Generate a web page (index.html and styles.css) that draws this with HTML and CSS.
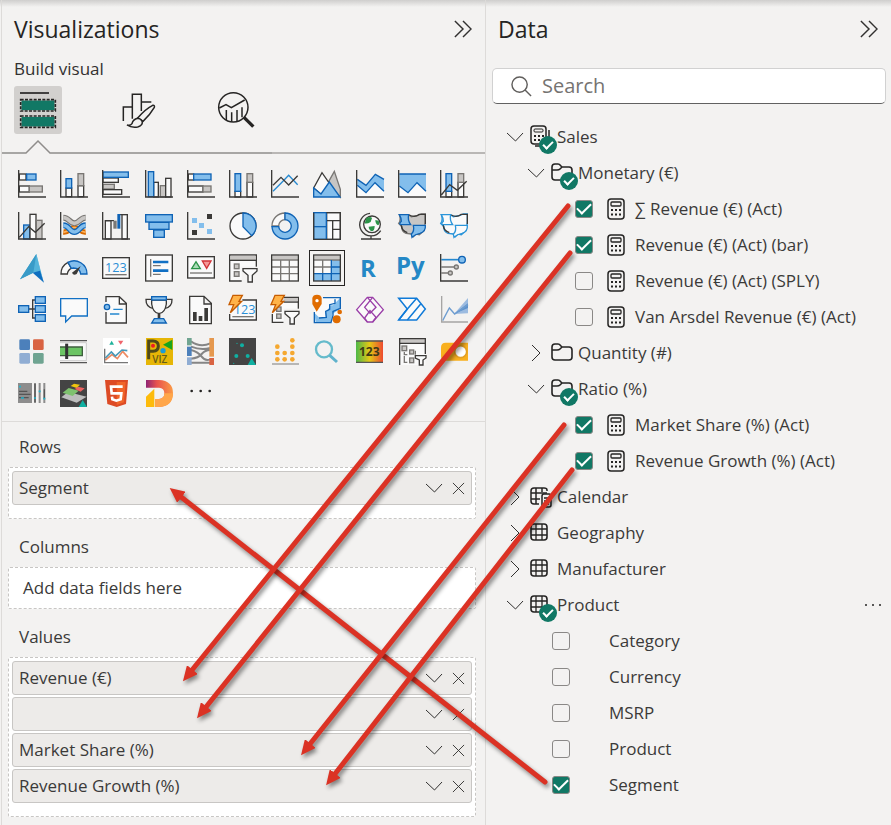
FILE: index.html
```html
<!DOCTYPE html>
<html lang="en">
<head>
<meta charset="utf-8">
<meta name="viewport" content="width=device-width, initial-scale=1">
<title>Visualizations and Data</title>
<link rel="stylesheet" href="styles.css">
</head>
<body>
<svg class="defs" aria-hidden="true">
  <symbol id="down" viewBox="0 0 18 18"><path d="M1 5L9.500 13L17 5"/></symbol>
  <symbol id="right" viewBox="0 0 18 18"><path d="M5 1L13 9L5 17"/></symbol>
  <symbol id="close" viewBox="0 0 14 14"><path d="M1 1L13 13M13 1L1 13"/></symbol>
  <symbol id="collapse" viewBox="0 0 20 20"><path d="M1 1L10 10L1 19M10 1L19 10L10 19"/></symbol>
  <symbol id="calc" viewBox="0 0 18 22">
    <rect x="1" y="1" width="16" height="20" rx="3" fill="none" stroke="#252423" stroke-width="1.500"/>
    <rect x="4" y="4" width="10" height="4" rx="1" fill="none" stroke="#252423" stroke-width="1.300"/>
    <path d="M4 12h2M8 12h2M12 12h2M4 16.500h2M8 16.500h2M12 16.500h2" stroke="#252423" stroke-width="2"/>
  </symbol>
  <symbol id="table" viewBox="0 0 18 18">
    <rect x="1" y="1" width="16" height="16" rx="3" fill="none" stroke="#252423" stroke-width="1.600"/>
    <path d="M6 1V17M12 1V17M1 6H17M1 12H17" stroke="#252423" stroke-width="1.300"/>
  </symbol>
  <symbol id="folder" viewBox="0 0 22 18">
    <path d="M1 4Q1 1 4 1H7Q8.500 1 9.500 2.500L11 4H18Q21 4 21 7V14Q21 17 18 17H4Q1 17 1 14ZM1 7H6Q8 7 9 6L11 4" fill="none" stroke="#252423" stroke-width="1.600"/>
  </symbol>
</svg>

<main class="app">
  <section class="pane viz">
    <header class="pane-head">
      <h1>Visualizations</h1>
      <button class="plain" aria-label="Collapse Visualizations"><svg class="stroke collapse"><use href="#collapse"/></svg></button>
    </header>
    <h2>Build visual</h2>
    <div class="modes">
      <button class="mode on" aria-label="Build visual">
        <svg viewBox="0 0 144 144"><path d="M18 21H105" stroke="#252423" stroke-width="5"/><rect x="20" y="42" width="104" height="33" fill="#117865"/><rect x="20" y="92" width="104" height="32" fill="#117865"/><g fill="none" stroke="#d2d0ce" stroke-width="5"><rect x="20" y="41" width="104" height="34"/><rect x="20" y="90" width="104" height="34"/></g><g fill="none" stroke="#252423" stroke-width="5" stroke-dasharray="9 4"><rect x="20" y="41" width="104" height="34"/><rect x="20" y="90" width="104" height="34"/></g></svg>
      </button>
      <button class="mode" aria-label="Format visual">
        <svg viewBox="0 0 144 144" fill="none" stroke="#252423" stroke-width="4.500"><path d="M31 105V63H58M58 98V25H85V75M85 48H115"/><path d="M74 96Q96 70 119 58Q126 57 124 64Q110 88 90 106Z" fill="#f3f2f1"/><path d="M74 97Q60 100 57 113Q52 120 42 117Q55 126 74 123Q89 119 88 107Q84 98 74 97Z" fill="#f3f2f1"/></svg>
      </button>
      <button class="mode" aria-label="Analytics">
        <svg viewBox="0 0 144 144" fill="none" stroke="#252423" stroke-width="4.500"><circle cx="64" cy="64" r="44"/><path d="M22 66L42 56L58 65L98 42M43 102V72M59 107V79M75 105V72M90 94V64"/><path d="M96 94L124 122" stroke-width="10"/></svg>
      </button>
    </div>
    <div class="divider" aria-hidden="true">
      <svg viewBox="0 0 270 14"><path d="M0 13H24L36 1L48 13H270" fill="none" stroke="#8f8d8b" stroke-width="1.500"/></svg><span></span>
    </div>

    <div class="gallery">
      <button aria-label="Stacked bar chart"><svg viewBox="0 0 84 84"><rect class="w" x="4" y="12" width="20" height="18"/><rect class="b" x="26" y="12" width="28" height="18"/><rect class="w" x="4" y="48" width="30" height="18"/><rect class="g" x="34" y="48" width="39" height="18"/><path class="k" d="M2 0V81H84"/></svg></button>
      <button aria-label="Stacked column chart"><svg viewBox="0 0 84 84"><rect class="w" x="18" y="54" width="17" height="26"/><rect class="b" x="18" y="26" width="17" height="28"/><rect class="w" x="54" y="47" width="17" height="33"/><rect class="g" x="54" y="11" width="17" height="36"/><path class="k" d="M2 0V81H84"/></svg></button>
      <button aria-label="Clustered bar chart"><svg viewBox="0 0 84 84"><rect class="w" x="3" y="24" width="46" height="13"/><rect class="g" x="3" y="43" width="34" height="14"/><rect class="w" x="3" y="59" width="56" height="14"/><rect class="b" x="3" y="6" width="76" height="16"/><path class="k" d="M2 0V81H84"/></svg></button>
      <button aria-label="Clustered column chart"><svg viewBox="0 0 84 84"><rect class="w" x="26" y="37" width="14" height="44"/><rect class="g" x="46" y="47" width="16" height="34"/><rect class="w" x="62" y="25" width="16" height="56"/><rect class="b" x="10" y="5" width="16" height="75"/><path class="k" d="M2 0V81H84"/></svg></button>
      <button aria-label="100% stacked bar chart"><svg viewBox="0 0 84 84"><rect class="w" x="4" y="12" width="16" height="18"/><rect class="b" x="20" y="12" width="52" height="18"/><rect class="w" x="4" y="48" width="44" height="18"/><rect class="g" x="48" y="48" width="24" height="18"/><path class="k" d="M2 0V81H84"/></svg></button>
      <button aria-label="100% stacked column chart"><svg viewBox="0 0 84 84"><rect class="w" x="18" y="64" width="17" height="17"/><rect class="b" x="18" y="11" width="17" height="53"/><rect class="w" x="54" y="37" width="17" height="44"/><rect class="g" x="54" y="11" width="17" height="26"/><path class="k" d="M2 0V81H84"/></svg></button>
      <button aria-label="Line chart"><svg viewBox="0 0 84 84"><path d="M6 64L30 40L53 16L80 44" fill="none" stroke="#2488cf" stroke-width="4"/><path class="k" d="M6 46L30 22L53 45L80 17M2 0V81H84"/></svg></button>
      <button aria-label="Area chart"><svg viewBox="0 0 84 84"><path class="g" d="M44 40L64 4L82 58V81Z"/><path class="w" d="M2 54L27 8L52 44L30 78Z"/><path class="b" d="M2 54L24 72L49 36L81 81H2Z"/></svg></button>
      <button aria-label="Stacked area chart"><svg viewBox="0 0 84 84"><path fill="#fafafa" d="M4 46L30 68L57 38L84 62V80H4Z"/><path d="M4 28L30 46L58 13L84 28V64L57 38L30 68L4 46Z" fill="#83beec"/><path class="bl" d="M4 28L30 46L58 13L84 28M4 46L30 68L57 38L84 64"/><path class="k" d="M2 0V81H84"/></svg></button>
      <button aria-label="100% stacked area chart"><svg viewBox="0 0 84 84"><path fill="#fafafa" d="M4 46L30 68L57 38L84 62V80H4Z"/><path d="M4 12H84V64L57 38L30 68L4 48Z" fill="#83beec"/><path class="bl" d="M4 12H84M4 48L30 68L57 38L84 64"/><path class="k" d="M2 0V81H84"/></svg></button>
      <button aria-label="Line and stacked column chart"><svg viewBox="0 0 84 84"><rect class="w" x="18" y="64" width="17" height="17"/><rect class="b" x="18" y="11" width="17" height="53"/><rect class="w" x="54" y="37" width="17" height="44"/><rect class="g" x="54" y="11" width="17" height="26"/><path class="k" d="M4 75L29 44L52 61L80 34M2 0V81H84"/></svg></button>

      <button aria-label="Line and clustered column chart"><svg viewBox="0 0 84 84"><rect class="b" x="17" y="39" width="18" height="42"/><rect class="w" x="36" y="7" width="18" height="74"/><rect class="g" x="55" y="25" width="17" height="56"/><path class="k" d="M4 76L32 44L52 61L80 34M2 0V81H84"/></svg></button>
      <button aria-label="Ribbon chart"><svg viewBox="0 0 84 84" fill="none"><path d="M10 60C28 62 30 46 43 46S60 62 77 60" stroke="#d96a00" stroke-width="16"/><path d="M10 60C28 62 30 46 43 46S60 62 77 60" stroke="#ffb25a" stroke-width="5"/><path d="M10 17C28 17 28 34 43 34S60 17 77 17" stroke="#797774" stroke-width="18"/><path d="M10 17C28 17 28 34 43 34S60 17 77 17" stroke="#c8c6c4" stroke-width="11"/><path d="M10 40C28 40 28 60 43 60S60 40 77 40" stroke="#0f63b5" stroke-width="18"/><path d="M10 40C28 40 28 60 43 60S60 40 77 40" stroke="#83beec" stroke-width="10"/><path class="k" d="M2 0V81H84"/></svg></button>
      <button aria-label="Waterfall chart"><svg viewBox="0 0 84 84"><rect class="w" x="10" y="26" width="17" height="55"/><path class="k" d="M10 26H36M48 8H76"/><rect x="34" y="26" width="10" height="24" fill="#797774"/><rect x="46" y="6" width="9" height="44" fill="#0f63b5"/><rect class="w" x="60" y="8" width="16" height="73"/><path class="k" d="M2 0V81H84"/></svg></button>
      <button aria-label="Funnel"><svg viewBox="0 0 84 84"><rect class="b" x="26" y="54" width="32" height="22"/><rect class="b" x="12" y="31" width="60" height="21"/><rect class="b" x="2" y="8" width="80" height="22"/></svg></button>
      <button aria-label="Scatter chart"><svg viewBox="0 0 84 84"><path fill="#83beec" d="M15 18h15v15h-15zM36 33h15v15h-15zM60 51h15v15h-15z"/><path fill="#3b3a38" d="M60 6h15v15h-15zM15 54h15v15h-15z"/><path class="k" d="M2 0V81H84"/></svg></button>
      <button aria-label="Pie chart"><svg viewBox="0 0 84 84"><circle class="w" cx="42" cy="42" r="39"/><path class="b" d="M42 3A39 39 0 0 1 68 71L42 44Z"/></svg></button>
      <button aria-label="Donut chart"><svg viewBox="0 0 84 84"><path d="M42 3A39 39 0 0 0 3 42H23A19 19 0 0 1 42 23Z" fill="#fafafa" stroke="#797774" stroke-width="4"/><path class="b" d="M42 3A39 39 0 1 1 3 44H23A19 19 0 1 0 42 23Z"/></svg></button>
      <button aria-label="Treemap"><svg viewBox="0 0 84 84"><path class="w" d="M41 2H82V82H41ZM41 26H82M59 26V82M59 52H82"/><rect class="b" x="2" y="2" width="38" height="42"/><rect class="b" x="2" y="44" width="38" height="38"/><path class="k" d="M40 2H82V82H2V2"/></svg></button>
      <button aria-label="Map"><svg viewBox="0 0 84 84"><circle class="w" cx="48" cy="37" r="25"/><path d="M31 18Q44 12 48 18L44 30Q34 36 26 34ZM58 24L68 26Q72 36 66 40Q58 36 58 24ZM38 44L56 42Q56 56 48 58Q38 54 38 44Z" fill="#2b9348"/><path class="k" d="M42 4A34 34 0 1 0 74 56M45 70V81M15 81H75"/></svg></button>
      <button aria-label="Filled map"><svg viewBox="0 0 84 84"><path d="M4 8H32L40 14L60 10L70 6H82V32L78 56L64 68L54 66L46 74L40 66L24 64Q10 60 12 44L2 34Q10 24 4 8Z" class="g"/><path d="M4 8H32Q28 24 38 38H8Q2 36 10 28Q10 18 4 8ZM46 40H82Q84 58 66 64Q52 66 42 76L40 66Q50 58 46 40Z" class="b"/><path class="k" d="M34 9Q50 18 64 7H82V36M10 40Q10 56 28 62"/></svg></button>
      <button aria-label="Shape map"><svg viewBox="0 0 84 84" fill="#fafafa" stroke="#2b95d9" stroke-width="4"><path d="M4 8H32L40 14L60 10L70 6H82V32L78 56L64 68L54 66L46 74L40 66L24 64Q10 60 12 44L2 34Q10 24 4 8Z"/><path d="M4 8H32Q28 24 38 38H8Q2 36 10 28Q10 18 4 8ZM46 40H82Q84 58 66 64Q52 66 42 76L40 66Q50 58 46 40Z"/><path class="k" d="M34 9Q50 18 64 7H82V36M10 40Q10 56 28 62"/></svg></button>

      <button aria-label="Azure map"><svg viewBox="0 0 84 84"><path d="M55 0L6 76L46 56Z" fill="#3da9d3"/><path d="M55 0L62 38L46 56L6 76Z" fill="#399bc8"/><path d="M55 0L77 84L66 54Z" fill="#58b8e0"/><path d="M55 0L70 62L46 56Z" fill="#54b4db"/><path d="M44 56L66 50L78 86Z" fill="#0f6fc0"/></svg></button>
      <button aria-label="Gauge"><svg viewBox="0 0 84 84"><path class="w" d="M3 60A39 39 0 0 1 24 25L34 43Q24 47 22 60Z"/><path class="b" d="M24 25A39 39 0 0 1 81 60H62Q60 42 40 42L34 43Z"/><path d="M62 36L50 60Q40 66 36 56Z" fill="#3b3a38"/></svg></button>
      <button aria-label="Card"><svg viewBox="0 0 84 84"><rect class="w" x="2" y="11" width="80" height="62"/><text x="9" y="54" font-size="38" fill="#2b8fd6">123</text><path class="gl" d="M10 62H74"/></svg></button>
      <button aria-label="Multi-row card"><svg viewBox="0 0 84 84"><rect class="w" x="2" y="3" width="80" height="78"/><path class="gl" d="M17 15V68M24 35H47M24 61H47"/><path d="M24 24H70M24 50H70" stroke="#1170c4" stroke-width="8"/></svg></button>
      <button aria-label="KPI"><svg viewBox="0 0 84 84"><rect class="w" x="2" y="8" width="80" height="64"/><path d="M14 44L27 23L40 44Z" fill="#a8dab5" stroke="#2b9348" stroke-width="4"/><path d="M46 21H72L59 43Z" fill="#f59a98" stroke="#d13438" stroke-width="4"/><path class="gl" d="M9 57H75"/></svg></button>
      <button aria-label="Slicer"><svg viewBox="0 0 84 84"><path class="w" d="M2 3H82V81H2Z"/><path d="M4 5H80V18H4Z" fill="#c8c6c4"/><path class="k" d="M2 19H82"/><rect class="g" x="16" y="30" width="14" height="14"/><rect class="g" x="16" y="53" width="14" height="14"/><path d="M38 38H84V84H38Z" fill="#f3f2f1"/><path class="w" d="M42 44H84V51L70 64V84H57V64L42 51Z"/></svg></button>
      <button aria-label="Table"><svg viewBox="0 0 84 84"><rect x="2" y="3" width="80" height="78" fill="#fafafa"/><rect x="4" y="5" width="76" height="12" fill="#c8c6c4"/><path class="gl" d="M2 18H82M2 39H82M2 59H82M29 18V80M55 18V80"/><rect class="k" x="2" y="3" width="80" height="78"/></svg></button>
      <button class="selected" aria-label="Matrix"><svg viewBox="0 0 84 84"><rect x="2" y="3" width="80" height="78" fill="#fafafa"/><path d="M55 18H82V81H2V59H55Z" fill="#83beec"/><rect x="4" y="5" width="76" height="12" fill="#c8c6c4"/><path class="gl" d="M2 18H82M2 39H55M29 18V59"/><path class="bl" d="M55 18V81M55 39H82M2 59H82M29 59V81"/><rect class="k" x="2" y="3" width="80" height="78"/></svg></button>
      <button aria-label="R script visual"><svg viewBox="0 0 84 84"><text x="12" y="68" font-size="72" font-weight="700" fill="#2488c6">R</text></svg></button>
      <button aria-label="Python visual"><svg viewBox="0 0 84 84"><text x="-6" y="60" font-size="72" font-weight="700" fill="#2488c6">Py</text></svg></button>
      <button aria-label="Key influencers"><svg viewBox="0 0 84 84"><path d="M4 17H56" stroke="#2488cf" stroke-width="5"/><circle class="b" cx="66" cy="17" r="10"/><path class="gl" d="M4 39H42M4 57H24"/><circle class="g" cx="49" cy="39" r="6"/><circle class="g" cx="31" cy="57" r="6"/><path class="k" d="M2 0V81H84"/></svg></button>

      <button aria-label="Decomposition tree"><svg viewBox="0 0 84 84"><path class="k" d="M32 39H52M52 12H44V66H52"/><rect class="b" x="2" y="29" width="30" height="20"/><rect class="b" x="52" y="2" width="30" height="20"/><rect class="b" x="52" y="29" width="30" height="20"/><rect class="b" x="52" y="56" width="30" height="20"/></svg></button>
      <button aria-label="Q and A"><svg viewBox="0 0 84 84"><path d="M2 8H82V60H35L17 78V60H2Z" fill="#fafafa" stroke="#1170c4" stroke-width="4"/></svg></button>
      <button aria-label="Smart narrative"><svg viewBox="0 0 84 84"><path d="M12 2H52L73 22V81H12Z" fill="#fafafa"/><path class="k" d="M12 18V2H52L73 22V81H12V48M52 2V24H73"/><circle class="b" cx="15" cy="33" r="8"/><path d="M34 40H62M24 54H52" stroke="#2488cf" stroke-width="4"/></svg></button>
      <button aria-label="Goals"><svg viewBox="0 0 84 84"><path class="k" d="M22 10H3Q2 34 26 38M62 10H81Q82 34 58 38"/><path class="w" d="M20 12H64V24Q60 50 44 52V68H40V52Q24 50 20 24Z"/><rect class="b" x="20" y="2" width="44" height="10"/><path class="b" d="M28 68H56L64 81H20Z"/></svg></button>
      <button aria-label="Paginated report"><svg viewBox="0 0 84 84"><path class="w" d="M8 1H51L73 22V83H8ZM51 1V24H73"/><path d="M18 48h11v27h-11zM35 60h11v15h-11zM52 36h11v39h-11z" fill="#3b3a38"/></svg></button>
      <button aria-label="Card (new)"><svg viewBox="0 0 84 84"><path d="M14 12H82V72H2V50Z" fill="#fafafa"/><path class="k" d="M40 12H82V72H2V54"/><text x="14" y="54" font-size="38" fill="#2b8fd6">123</text><path class="gl" d="M10 62H74"/><path class="o" d="M12 -2H40L30 16H38L4 50L14 26H0Z"/></svg></button>
      <button aria-label="Slicer (new)"><svg viewBox="0 0 84 84"><path d="M2 4H82V80H2Z" fill="#fafafa"/><path class="k" d="M38 4H82V40M38 18H82M4 54V79H38"/><path d="M38 6H80V16H36Z" fill="#c8c6c4"/><rect class="g" x="17" y="33" width="13" height="13"/><rect class="g" x="17" y="54" width="13" height="13"/><path d="M38 38H84V84H38Z" fill="#f3f2f1"/><path class="w" d="M42 46H84V53L70 66V84H57V66L42 53Z"/><path class="o" d="M12 -2H40L30 16H38L4 50L14 26H0Z"/></svg></button>
      <button aria-label="ArcGIS map"><svg viewBox="0 0 84 84"><path d="M4 5H82V50L76 80H4Z" fill="#fafafa"/><path d="M4 50L8 80H54L58 54L82 38V5L60 28H52L44 42L36 50L38 62L20 66Z" fill="#83beec"/><path class="bl" d="M30 5H82V40M4 48V80H56M66 10V22L50 26V40L38 46L40 64L18 66M80 38L60 46V58L54 80"/><path d="M11 47L-2 24V6Q0 -4 12 -4Q24 -4 26 6V24Z" fill="#e06c00"/><circle cx="12" cy="14" r="5" fill="#fff"/><circle cx="80" cy="48" r="7" fill="#e06c00"/><circle cx="71" cy="70" r="12" fill="#e06c00"/></svg></button>
      <button aria-label="Power Apps"><svg viewBox="0 0 84 84" fill="#fafafa" stroke="#9a3fa8" stroke-width="4"><path d="M34 4H50L82 41L50 78H34L2 41Z"/><path d="M34 4L60 34L42 52L26 34L50 4M34 78L26 66L42 44L60 64L50 78M42 44L26 66M42 52L60 34" fill="none"/></svg></button>
      <button aria-label="Power Automate"><svg viewBox="0 0 84 84" fill="#fafafa" stroke="#0f7ad8" stroke-width="4.500"><path d="M2 7H56L82 39L56 72H2L28 39Z"/><path d="M28 39L56 7M28 72L68 24M2 72L28 39" fill="none"/></svg></button>
      <button aria-label="Forecast line"><svg viewBox="0 0 84 84"><path d="M42 54L84 6V52Z" fill="#9cbbe0"/><path d="M42 54L84 22V36Z" fill="#5f92cc"/><path d="M8 74L28 36L44 54L84 26" fill="none" stroke="#6e9dd0" stroke-width="4"/><path d="M5 0V78H84" fill="none" stroke="#a6a5a4" stroke-width="4"/></svg></button>

      <button aria-label="Tile grid"><svg viewBox="0 0 84 84"><rect x="4" y="4" width="32" height="32" rx="4" fill="#4c80bb"/><rect x="45" y="4" width="32" height="32" rx="4" fill="#d96342"/><rect x="4" y="45" width="32" height="32" rx="4" fill="#90add3"/><rect x="45" y="45" width="32" height="32" rx="4" fill="#6fa491"/></svg></button>
      <button aria-label="Bullet chart"><svg viewBox="0 0 84 84"><path d="M0 8H81M0 74H81" stroke="#555" stroke-width="4"/><path d="M0 14H79V68H0" fill="#f8f8f8" stroke="#ccc" stroke-width="3"/><path d="M0 27H67V53H0" fill="#6bc464" stroke="#3f5e3e" stroke-width="4"/><path d="M20 17V63" stroke="#333" stroke-width="9"/></svg></button>
      <button aria-label="Comparison line"><svg viewBox="0 0 84 84"><path fill="#fff" d="M3 0H84V81H3Z"/><path d="M22 20L29 8L36 20Z" fill="#20b29b"/><path d="M48 8H64L56 20Z" fill="#f0646c"/><path d="M10 66L30 50L46 62L62 40L78 58" fill="none" stroke="#ee8b62" stroke-width="5"/><path d="M10 60L28 42L40 54L60 36L76 38" fill="none" stroke="#4799b8" stroke-width="5"/><path d="M8 32V74H78" fill="none" stroke="#777" stroke-width="4"/></svg></button>
      <button aria-label="PViz"><svg viewBox="0 0 84 84"><path fill="#e6b606" d="M3 0H84V81H3Z"/><path d="M11 64V9H24Q40 9 40 24T24 40H12" fill="none" stroke="#504a18" stroke-width="9"/><text x="22" y="76" font-size="30" font-weight="600" fill="#665d16">VIZ</text><circle cx="24" cy="23" r="6" fill="#ed1c24"/><circle cx="54" cy="38" r="8" fill="#1a9bd7"/><path d="M54 20L82 5V36Z" fill="#18a51c"/></svg></button>
      <button aria-label="Sankey"><svg viewBox="0 0 84 84"><path d="M12 10Q40 30 70 16M12 26Q42 38 70 30M12 62Q34 60 44 48T70 36M12 36Q34 42 44 56T70 64M12 74H70" fill="none" stroke="#858585" stroke-width="6"/><path d="M0 0H14V22H0Z" fill="#70a491"/><path d="M0 26H14V54H0Z" fill="#4c80bb"/><path d="M0 58H14V81H0Z" fill="#90add3"/><path d="M67 0H81V56H67Z" fill="#e5984e"/><path d="M67 60H81V81H67Z" fill="#d96342"/></svg></button>
      <button aria-label="Dark scatter"><svg viewBox="0 0 84 84"><path fill="#444" d="M0 0H81V81H0Z"/><g fill="#10b0a2"><circle cx="39" cy="22" r="6"/><circle cx="22" cy="54" r="6"/><circle cx="56" cy="54" r="6"/><circle cx="24" cy="16" r="2"/><circle cx="14" cy="76" r="2"/><path d="M68 60L81 81H56Z"/></g></svg></button>
      <button aria-label="Dot plot"><svg viewBox="0 0 84 84"><g fill="#f5a82f"><circle cx="19" cy="26" r="7"/><circle cx="19" cy="45" r="7"/><circle cx="19" cy="64" r="7"/><circle cx="41" cy="45" r="7"/><circle cx="41" cy="64" r="7"/><circle cx="64" cy="7" r="7"/><circle cx="64" cy="26" r="7"/><circle cx="64" cy="45" r="7"/><circle cx="64" cy="64" r="7"/></g><path d="M3 78H84" stroke="#999" stroke-width="4"/></svg></button>
      <button aria-label="Text search"><svg viewBox="0 0 84 84"><circle cx="33" cy="34" r="24" fill="none" stroke="#65bbcb" stroke-width="7"/><path d="M50 52L72 72" stroke="#5fb2cc" stroke-width="9"/></svg></button>
      <button aria-label="Gradient card"><svg viewBox="0 0 84 84"><defs><linearGradient id="heat"><stop offset="0" stop-color="#4db848"/><stop offset=".5" stop-color="#e4c916"/><stop offset="1" stop-color="#ee4a2f"/></linearGradient></defs><rect x="0" y="8" width="81" height="66" fill="url(#heat)"/><path d="M0 9H81M0 73H81" stroke="#555" stroke-width="4"/><text x="9" y="54" font-size="36" font-weight="700" fill="#3e3a16">123</text></svg></button>
      <button aria-label="Hierarchy slicer"><svg viewBox="0 0 84 84"><path fill="#fafafa" d="M4 2H82V81H4Z"/><path d="M4 2H82V16H4Z" fill="#c8c6c4"/><path class="k" d="M5 81V2H82V48M5 16H82"/><rect class="g" x="12" y="24" width="14" height="14"/><rect class="g" x="35" y="36" width="12" height="12"/><rect class="g" x="35" y="60" width="12" height="14"/><path class="gl" d="M19 42V50H28M19 54V73H28M52 38V50"/><path class="w" d="M52 53H84V60L75 66V81H64V66L52 60Z"/></svg></button>
      <button aria-label="Rounded gauge"><svg viewBox="0 0 84 84"><path d="M17 14H84V68H17Q3 68 3 54V28Q3 14 17 14Z" fill="#f9b01e"/><circle cx="62" cy="41" r="18" fill="#fff" stroke="#e3a023" stroke-width="5"/></svg></button>

      <button aria-label="Text list"><svg viewBox="0 0 84 84"><path fill="#8d8d8d" d="M0 9H42V69H0ZM48 9H54V69H48ZM62 9H68V69H62ZM76 9H82V69H76Z"/><path d="M3 34H28M3 43H38M3 53H32M51 12V66M79 28V56" stroke="#555" stroke-width="4"/><path d="M3 20H9M9 54H18M48 54H54M62 34H68M76 56H82" stroke="#22b4cb" stroke-width="5"/></svg></button>
      <button aria-label="Layered map"><svg viewBox="0 0 84 84"><path fill="#444" d="M0 0H81V81H0Z"/><path d="M4 52L24 36L80 50L50 68Z" fill="#bdbdbd"/><path d="M8 38L26 24L56 32L38 48Z" fill="#7ec16e"/><path d="M32 18L42 11L60 14L50 24Z" fill="#efc40e"/><path d="M44 27L54 20L74 25L62 35Z" fill="#ed6260"/><path d="M68 60L81 81H56Z" fill="#10b0a2"/></svg></button>
      <button aria-label="HTML content"><svg viewBox="0 0 84 84"><path d="M9 0H78L72 72L44 81L16 72Z" fill="#dd4b25"/><path d="M44 6H71L66 67L44 75Z" fill="#f06529"/><path d="M62 20H27L29 40H58L56 58L43 62L31 58L30 50" fill="none" stroke="#fff" stroke-width="8"/></svg></button>
      <button aria-label="Dashboard builder"><svg viewBox="0 0 84 84"><defs><linearGradient id="sweep" x2="1"><stop offset="0" stop-color="#8f2475"/><stop offset=".4" stop-color="#e8524e"/><stop offset="1" stop-color="#fb9b45"/></linearGradient></defs><path d="M3 0H42Q84 2 84 40T42 81H30V57H42Q58 56 58 40T42 23H3Z" fill="url(#sweep)"/><path d="M3 50L28 26V81H3Z" fill="#fdbb0b"/><path d="M30 57H42Q58 56 58 40H84Q82 81 42 81H30Z" fill="#ffa64a"/></svg></button>
      <button aria-label="Get more visuals"><svg viewBox="0 0 84 84"><g fill="#252423"><circle cx="14" cy="33" r="4"/><circle cx="41" cy="33" r="4"/><circle cx="68" cy="33" r="4"/></g></svg></button>
    </div>

    <div class="wells">
      <h3>Rows</h3>
      <div class="well">
        <div class="pill"><span>Segment</span><button class="plain" aria-label="Segment options"><svg class="stroke chev"><use href="#down"/></svg></button><button class="plain" aria-label="Remove Segment"><svg class="stroke x"><use href="#close"/></svg></button></div>
      </div>
      <h3>Columns</h3>
      <div class="well empty">Add data fields here</div>
      <h3>Values</h3>
      <div class="well">
        <div class="pill"><span>Revenue (€)</span><button class="plain" aria-label="Revenue options"><svg class="stroke chev"><use href="#down"/></svg></button><button class="plain" aria-label="Remove Revenue"><svg class="stroke x"><use href="#close"/></svg></button></div>
        <div class="pill"><span></span><button class="plain" aria-label="Field options"><svg class="stroke chev"><use href="#down"/></svg></button><button class="plain" aria-label="Remove field"><svg class="stroke x"><use href="#close"/></svg></button></div>
        <div class="pill"><span>Market Share (%)</span><button class="plain" aria-label="Market Share options"><svg class="stroke chev"><use href="#down"/></svg></button><button class="plain" aria-label="Remove Market Share"><svg class="stroke x"><use href="#close"/></svg></button></div>
        <div class="pill"><span>Revenue Growth (%)</span><button class="plain" aria-label="Revenue Growth options"><svg class="stroke chev"><use href="#down"/></svg></button><button class="plain" aria-label="Remove Revenue Growth"><svg class="stroke x"><use href="#close"/></svg></button></div>
      </div>
    </div>
  </section>

  <section class="pane data">
    <header class="pane-head">
      <h1>Data</h1>
      <button class="plain" aria-label="Collapse Data"><svg class="stroke collapse"><use href="#collapse"/></svg></button>
    </header>
    <label class="search">
      <svg viewBox="0 0 22 22" fill="none" stroke="#605e5c" stroke-width="1.500"><circle cx="9" cy="9" r="8"/><path d="M14.500 14.500L21 21"/></svg>
      <input type="search" placeholder="Search" aria-label="Search">
    </label>
    <div class="tree">
      <div class="row top"><button class="plain tw" aria-label="Collapse Sales"><svg class="stroke chev"><use href="#down"/></svg></button><span class="ico"><svg viewBox="0 0 22 22"><path d="M19 4V16Q19 20 15 20H5" fill="none" stroke="#252423" stroke-width="1.500"/><rect x="1" y="0" width="15" height="18" rx="3" fill="#f3f2f1" stroke="#252423" stroke-width="1.500"/><rect x="4" y="3" width="9" height="3" rx="1" fill="none" stroke="#252423"/><path d="M4 10h2M8 10h2M12 10h2M4 14h2M8 14h2" stroke="#252423" stroke-width="2"/></svg><i class="badge"></i></span><span>Sales</span></div>
      <div class="row sub"><button class="plain tw" aria-label="Collapse Monetary"><svg class="stroke chev"><use href="#down"/></svg></button><span class="ico"><svg class="folder"><use href="#folder"/></svg><i class="badge"></i></span><span>Monetary (€)</span></div>
      <label class="row leaf"><input type="checkbox" checked><svg class="calc"><use href="#calc"/></svg><span>∑ Revenue (€) (Act)</span></label>
      <label class="row leaf"><input type="checkbox" checked><svg class="calc"><use href="#calc"/></svg><span>Revenue (€) (Act) (bar)</span></label>
      <label class="row leaf"><input type="checkbox"><svg class="calc"><use href="#calc"/></svg><span>Revenue (€) (Act) (SPLY)</span></label>
      <label class="row leaf"><input type="checkbox"><svg class="calc"><use href="#calc"/></svg><span>Van Arsdel Revenue (€) (Act)</span></label>
      <div class="row sub"><button class="plain tw" aria-label="Expand Quantity"><svg class="stroke chev"><use href="#right"/></svg></button><span class="ico"><svg class="folder"><use href="#folder"/></svg></span><span>Quantity (#)</span></div>
      <div class="row sub"><button class="plain tw" aria-label="Collapse Ratio"><svg class="stroke chev"><use href="#down"/></svg></button><span class="ico"><svg class="folder"><use href="#folder"/></svg><i class="badge"></i></span><span>Ratio (%)</span></div>
      <label class="row leaf"><input type="checkbox" checked><svg class="calc"><use href="#calc"/></svg><span>Market Share (%) (Act)</span></label>
      <label class="row leaf"><input type="checkbox" checked><svg class="calc"><use href="#calc"/></svg><span>Revenue Growth (%) (Act)</span></label>
      <div class="row top"><button class="plain tw" aria-label="Expand Calendar"><svg class="stroke chev"><use href="#right"/></svg></button><span class="ico"><svg viewBox="0 0 22 22" fill="none" stroke="#252423" stroke-width="1.500"><path d="M17 5V4Q17 2 14 2H4Q1 2 1 5V15Q1 18 4 18H9M6 2V18M12 2V6M1 7H17M1 13H10"/><rect x="12" y="8" width="9" height="13" rx="2" fill="#f3f2f1"/><path d="M14 12H19M14 15H19M14 18H19"/></svg></span><span>Calendar</span></div>
      <div class="row top"><button class="plain tw" aria-label="Expand Geography"><svg class="stroke chev"><use href="#right"/></svg></button><span class="ico"><svg class="table"><use href="#table"/></svg></span><span>Geography</span></div>
      <div class="row top"><button class="plain tw" aria-label="Expand Manufacturer"><svg class="stroke chev"><use href="#right"/></svg></button><span class="ico"><svg class="table"><use href="#table"/></svg></span><span>Manufacturer</span></div>
      <div class="row top"><button class="plain tw" aria-label="Collapse Product"><svg class="stroke chev"><use href="#down"/></svg></button><span class="ico"><svg class="table"><use href="#table"/></svg><i class="badge"></i></span><span>Product</span><button class="plain more" aria-label="More options"><svg viewBox="0 0 18 4" fill="#252423"><circle cx="2" cy="2" r="1"/><circle cx="9" cy="2" r="1"/><circle cx="16" cy="2" r="1"/></svg></button></div>
      <label class="row column"><input type="checkbox"><span>Category</span></label>
      <label class="row column"><input type="checkbox"><span>Currency</span></label>
      <label class="row column"><input type="checkbox"><span>MSRP</span></label>
      <label class="row column"><input type="checkbox"><span>Product</span></label>
      <label class="row column"><input type="checkbox" checked><span>Segment</span></label>
    </div>
  </section>

  <svg class="arrows" viewBox="0 0 891 825" aria-hidden="true">
    <defs><marker id="head" markerUnits="userSpaceOnUse" markerWidth="16" markerHeight="14" refX="7" refY="7" orient="auto"><path d="M0 0L15 7L0 14Z" fill="#db3224"/></marker></defs>
    <path d="M545 782L176 493"/>
    <path d="M568 206L188 675"/>
    <path d="M570 253L202 712"/>
    <path d="M564 425L306 749"/>
    <path d="M572 470L331 779"/>
  </svg>
</main>
</body>
</html>
```
FILE: styles.css
```css
* { box-sizing: border-box; }

body {
  margin: 0;
  background: #f3f2f1;
  color: #3b3a39;
  font: 17px/24px "Open Sans", "Noto Sans", sans-serif;
}

h1, h2, h3 { margin: 0; }
svg { display: block; overflow: visible; }
.defs { position: absolute; width: 0; height: 0; }

.plain {
  display: block;
  padding: 0;
  border: 0;
  background: none;
}

.stroke { fill: none; stroke: #323130; stroke-width: 1; }
.collapse { width: 18px; height: 18px; stroke-width: 1.6; }
.chev { width: 18px; height: 18px; }
.x { width: 13px; height: 13px; }

.app {
  position: relative;
  display: grid;
  grid-template-columns: minmax(0, 6fr) minmax(0, 5fr);
  min-height: 100vh;
  background: linear-gradient(#cfcecd, #f3f2f1 7px);
}

.viz {
  margin-left: 1px;
  border-left: 1px solid #dddbd9;
  border-right: 1px solid #dddbd9;
}

.pane-head {
  display: flex;
  align-items: center;
  justify-content: space-between;
  height: 58px;
  padding: 0 13px 0 12px;
}

h1 {
  color: #252423;
  font-size: 23px;
  font-weight: 500;
}

h2 {
  padding-left: 12px;
  color: #323130;
  font-size: 17px;
  font-weight: 500;
  line-height: 22px;
}

.modes {
  display: flex;
  gap: 51px;
  padding: 6px 12px;
}

.mode {
  width: 48px;
  height: 48px;
  padding: 0;
  border: 0;
  border-radius: 3px;
  background: none;
}

.mode.on { background: #d2d0ce; }

.divider {
  display: flex;
  align-items: flex-end;
  height: 14px;
}

.divider svg { width: 270px; height: 14px; }
.divider span { flex: 1; height: 2px; background: #b9b7b5; }

.gallery {
  display: grid;
  grid-template-columns: repeat(11, 28px);
  grid-auto-rows: 28px;
  justify-content: space-between;
  row-gap: 14px;
  padding: 16px 17px 13px 16px;
  border-bottom: 1px solid #dddbd9;
}

.gallery button {
  width: 28px;
  height: 28px;
  padding: 0;
  border: 0;
  background: none;
}

.gallery .selected { outline: 1px solid #252423; outline-offset: 3px; }
.gallery svg { width: 28px; height: 28px; }
.gallery text { font-family: "Open Sans", "Noto Sans", sans-serif; }

.k { fill: none; stroke: #3b3a38; stroke-width: 4; }
.w { fill: #fafafa; stroke: #3b3a38; stroke-width: 4; }
.b { fill: #83beec; stroke: #0f63b5; stroke-width: 4; }
.g { fill: #c8c6c4; stroke: #797774; stroke-width: 4; }
.o { fill: #ffb348; stroke: #c75c00; stroke-width: 4; }
.bl { fill: none; stroke: #0f63b5; stroke-width: 4; }
.gl { fill: none; stroke: #797774; stroke-width: 4; }

.wells { padding: 5px 9px 8px 6px; }

h3 {
  padding: 8px 11px;
  font-size: 17px;
  font-weight: 400;
}

.well {
  display: grid;
  gap: 2px;
  padding: 3px 3px 13px;
  border: 1px dashed #c8c6c4;
  border-radius: 2px;
  background: #fff;
}

.well + h3 { padding-top: 16px; }

.well.empty { padding: 8px 14px; line-height: 24px; }

.pill {
  display: flex;
  align-items: center;
  gap: 9px;
  height: 34px;
  padding: 0 6px;
  border: 1px solid #c8c6c4;
  border-radius: 3px;
  background: #edebe9;
}

.pill span { flex: 1; }

.search {
  display: flex;
  align-items: center;
  gap: 10px;
  height: 36px;
  margin: 10px 5px 15px 6px;
  padding: 0 18px;
  border: 1px solid #d1d1d1;
  border-bottom-color: #616161;
  border-radius: 5px;
  background: #fff;
}

.search svg { flex: none; width: 21px; height: 21px; }

.search input {
  flex: 1;
  min-width: 0;
  padding: 0;
  border: 0;
  outline: 0;
  background: none;
  color: #323130;
  font: inherit;
  font-size: 20px;
}

.search input::placeholder { color: #757371; }

.row {
  display: flex;
  align-items: center;
  height: 36px;
}

.top { padding-left: 20px; gap: 5px; }
.sub { padding-left: 41px; gap: 5px; }
.leaf { padding-left: 89px; gap: 9px; }
.leaf input { margin-right: 3px; }
.column { padding-left: 66px; gap: 39px; }

.tw { width: 19px; }

.ico {
  position: relative;
  width: 22px;
  height: 22px;
}

.ico svg { width: 22px; height: 22px; }
.ico .table { width: 18px; height: 18px; margin-top: 1px; }
.ico .folder { height: 18px; margin-top: 1px; }
.calc { width: 18px; height: 22px; margin: 0 1px 0 2px; }

.badge {
  position: absolute;
  top: 10px;
  left: 9px;
  display: grid;
  place-items: center;
  width: 18px;
  height: 18px;
  border-radius: 50%;
  background: #117865;
}

.badge::after {
  content: "";
  width: 8px;
  height: 4px;
  margin-bottom: 2px;
  border: solid #fff;
  border-width: 0 0 2px 2px;
  transform: rotate(-45deg);
}

.row input {
  display: grid;
  place-items: center;
  width: 18px;
  height: 18px;
  margin-block: 0;
  margin-left: 0;
  appearance: none;
  border: 1px solid #8a8886;
  border-radius: 3px;
}

.column input { margin-right: 0; }

.row input:checked { background: #117865; }

.row input:checked::after {
  content: "";
  width: 12px;
  height: 6px;
  margin-bottom: 4px;
  border: solid #fff;
  border-width: 0 0 2px 2px;
  transform: rotate(-45deg);
}

.more { width: 18px; margin: 0 9px 0 auto; }

.arrows {
  position: absolute;
  top: 0;
  left: 0;
  width: 100%;
  pointer-events: none;
}

.arrows > path {
  fill: none;
  stroke: #db3224;
  stroke-width: 5;
  stroke-linecap: round;
  marker-end: url(#head);
  filter: drop-shadow(2px 3px 2px rgb(0 0 0 / 45%));
}
```
